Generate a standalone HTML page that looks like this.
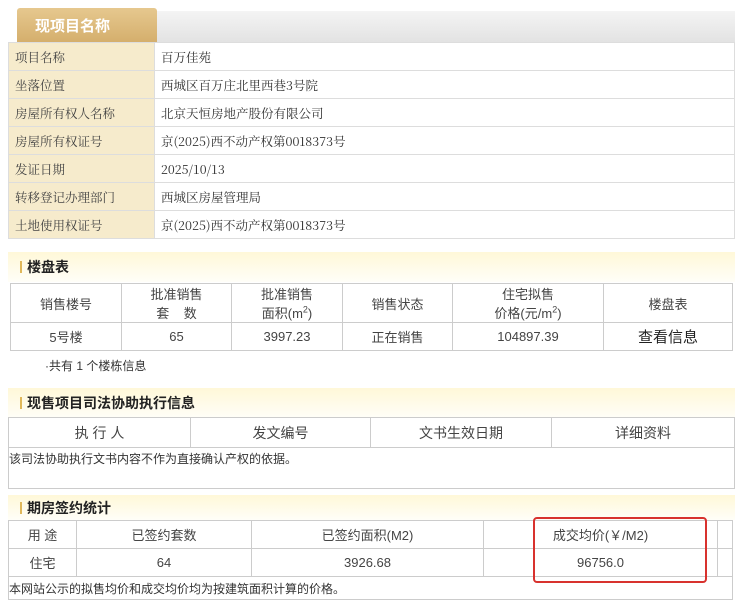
<!DOCTYPE html>
<html><head><meta charset="utf-8"><style>
*{margin:0;padding:0;box-sizing:border-box}
body{width:740px;height:600px;background:#fff;position:relative;overflow:hidden;font-family:"Liberation Sans","Noto Sans CJK SC",sans-serif;color:#333}
.abs{position:absolute}
.tab{left:17px;top:8px;width:140px;height:35px;background:linear-gradient(#e6c88f,#d4ae6c);border-radius:3px 3px 0 0;color:#fff;font-weight:bold;font-size:15px;padding:7px 0 0 18px;font-family:"Noto Sans CJK SC",sans-serif}
.gbar{left:157px;top:11px;width:578px;height:32px;background:linear-gradient(#f4f4f4,#e2e2e2)}
table{border-collapse:collapse;position:absolute}
.t1{left:8px;top:42px;width:727px;font-family:"Noto Serif CJK SC",serif;font-size:12.5px}
.t1 td{border:1px solid #ddd;height:28px;padding-left:6px}
.t1 td.l{background:#f6ebcc;width:146px;color:#444}
.hd{left:8px;width:727px;height:30px;background:linear-gradient(#fff8d8,#fffef8);font-weight:bold;font-size:14px;padding:5px 0 0 12px;color:#222}
.hd:before{content:"";display:inline-block;width:2px;height:12px;background:#e0b85a;margin-right:5px;vertical-align:-1px}
.t td{border:1px solid #ccc;text-align:center;font-size:13px;color:#444}
</style></head><body>
<div class="abs tab">现项目名称</div>
<div class="abs gbar"></div>
<table class="t1">
<tr><td class="l">项目名称</td><td>百万佳苑</td></tr>
<tr><td class="l">坐落位置</td><td>西城区百万庄北里西巷3号院</td></tr>
<tr><td class="l">房屋所有权人名称</td><td>北京天恒房地产股份有限公司</td></tr>
<tr><td class="l">房屋所有权证号</td><td>京(2025)西不动产权第0018373号</td></tr>
<tr><td class="l">发证日期</td><td>2025/10/13</td></tr>
<tr><td class="l">转移登记办理部门</td><td>西城区房屋管理局</td></tr>
<tr><td class="l">土地使用权证号</td><td>京(2025)西不动产权第0018373号</td></tr>
</table>

<div class="abs hd" style="top:252px">楼盘表</div>
<table class="t" style="left:10px;top:283px;width:723px">
<tr style="height:37px;font-size:12px"><td style="width:111px">销售楼号</td><td style="width:110px">批准销售<br>套&nbsp;&nbsp;&nbsp;&nbsp;数</td><td style="width:111px">批准销售<br>面积(m<sup style="font-size:9px">2</sup>)</td><td style="width:110px">销售状态</td><td style="width:151px">住宅拟售<br>价格(元/m<sup style="font-size:9px">2</sup>)</td><td>楼盘表</td></tr>
<tr style="height:28px"><td>5号楼</td><td>65</td><td>3997.23</td><td>正在销售</td><td>104897.39</td><td style="font-size:15px;color:#222">查看信息</td></tr>
</table>
<div class="abs" style="left:45px;top:357px;font-size:12px">·共有 1 个楼栋信息</div>

<div class="abs hd" style="top:388px">现售项目司法协助执行信息</div>
<div class="abs" style="left:8px;top:417px;width:727px;height:72px;border:1px solid #ccc;border-top:none"></div>
<table class="t" style="left:8px;top:417px;width:727px">
<tr style="height:30px;font-size:14px"><td style="width:182px;font-size:14px">执 行 人</td><td style="width:180px;font-size:14px">发文编号</td><td style="width:181px;font-size:14px">文书生效日期</td><td style="font-size:14px">详细资料</td></tr>
</table>
<div class="abs" style="left:9px;top:450px;font-size:12px">该司法协助执行文书内容不作为直接确认产权的依据。</div>

<div class="abs hd" style="top:495px;height:25px;padding-top:3px">期房签约统计</div>
<div class="abs" style="left:8px;top:520px;width:725px;height:80px;border:1px solid #ccc"></div>
<table class="t" style="left:8px;top:520px;width:725px">
<tr style="height:28px"><td style="width:68px">用 途</td><td style="width:175px">已签约套数</td><td style="width:232px">已签约面积(M2)</td><td style="width:234px">成交均价(￥/M2)</td><td></td></tr>
<tr style="height:28px"><td>住宅</td><td>64</td><td>3926.68</td><td>96756.0</td><td></td></tr>
</table>
<div class="abs" style="left:9px;top:580px;font-size:12px">本网站公示的拟售均价和成交均价均为按建筑面积计算的价格。</div>
<div class="abs" style="left:533px;top:517px;width:174px;height:66px;border:2px solid #d8322e;border-radius:4px"></div>
</body></html>
